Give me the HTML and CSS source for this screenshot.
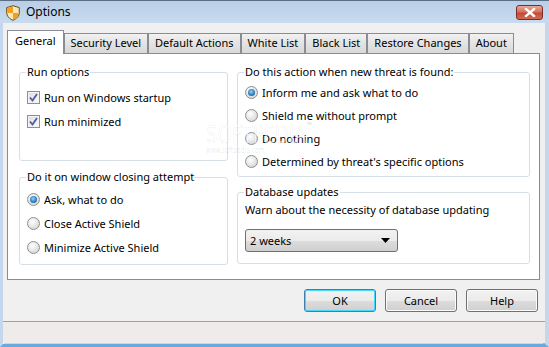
FILE: index.html
```html
<!DOCTYPE html>
<html lang="en">
<head>
    <meta charset="UTF-8">
    <meta name="viewport" content="width=device-width, initial-scale=1.0">
    <title>Options</title>
    <link rel="stylesheet" href="styles.css">
</head>
<body>
    <div class="window">
        <div class="titlebar">
            <svg class="app-icon" width="14" height="16" viewBox="0 0 14 16">
                <path d="M7 0.7 L13.3 2.6 L13.3 7.5 C13.3 11.3 10.5 13.8 7 15.3 C3.5 13.8 0.7 11.3 0.7 7.5 L0.7 2.6 Z" fill="#f6e7b8" stroke="#6b4a14" stroke-width="1"/>
                <path d="M1.2 3 L7 1.2 L7 8 L1.2 8 Z" fill="#f0a21e"/>
                <path d="M7 8 L12.8 8 C12.6 11 10.3 13.3 7 14.7 Z" fill="#f0a21e"/>
            </svg>
            <span class="title">Options</span>
            <button class="close">
                <svg width="12" height="9" viewBox="0 0 12 9">
                    <path d="M2 1 L10 8 M10 1 L2 8" stroke="#fff" stroke-width="2.4" stroke-linecap="square"/>
                </svg>
            </button>
        </div>

        <div class="frame">
            <div class="client">
                <div class="tabs">
                    <div class="tab active">General</div>
                    <div class="tab">Security Level</div>
                    <div class="tab">Default Actions</div>
                    <div class="tab">White List</div>
                    <div class="tab">Black List</div>
                    <div class="tab">Restore Changes</div>
                    <div class="tab">About</div>
                </div>

                <div class="panel">
                    <div class="col col-left">
                        <div class="group group-run">
                            <div class="group-title">Run options</div>
                            <div class="row"><span class="checkbox checked"><svg width="9" height="9" viewBox="0 0 9 9"><path d="M1 4.5 L3.5 7.5 L8 1" fill="none" stroke="#4b5fa0" stroke-width="1.8"/></svg></span>Run on Windows startup</div>
                            <div class="row"><span class="checkbox checked"><svg width="9" height="9" viewBox="0 0 9 9"><path d="M1 4.5 L3.5 7.5 L8 1" fill="none" stroke="#4b5fa0" stroke-width="1.8"/></svg></span>Run minimized</div>
                        </div>

                        <div class="group group-close">
                            <div class="group-title">Do it on window closing attempt</div>
                            <div class="row"><span class="radio on"></span>Ask, what to do</div>
                            <div class="row"><span class="radio"></span>Close Active Shield</div>
                            <div class="row"><span class="radio"></span>Minimize Active Shield</div>
                        </div>
                    </div>

                    <div class="col col-right">
                        <div class="group group-action">
                            <div class="group-title">Do this action when new threat is found:</div>
                            <div class="row row-tight"><span class="radio on"></span>Inform me and ask what to do</div>
                            <div class="row row-tight"><span class="radio"></span>Shield me without prompt</div>
                            <div class="row row-tight"><span class="radio"></span>Do nothing</div>
                            <div class="row row-tight"><span class="radio"></span>Determined by threat's specific options</div>
                        </div>

                        <div class="group group-db">
                            <div class="group-title">Database updates</div>
                            <div class="db-text">Warn about the necessity of database updating</div>
                            <div class="select">
                                <span>2 weeks</span>
                                <svg width="9" height="5" viewBox="0 0 9 5"><path d="M0 0 H9 L4.5 5 Z" fill="#000"/></svg>
                            </div>
                        </div>
                    </div>
                </div>

                <div class="actions">
                    <button class="btn default">OK</button>
                    <button class="btn">Cancel</button>
                    <button class="btn">Help</button>
                </div>
            </div>
            <div class="statusbar"></div>
        </div>

        <div class="watermark">SOFTPEDIA<span class="tm">™</span><div class="wm-url">www.softpedia.com</div></div>
    </div>
</body>
</html>
```

FILE: styles.css
```css
* {
    box-sizing: border-box;
}

body {
    margin: 0;
    font-family: "Noto Sans", "Open Sans", sans-serif;
    font-size: 11px;
    color: #000;
    background: #fff;
}

.window {
    position: relative;
    width: 549px;
    height: 347px;
    overflow: hidden;
    background: #c4d7ec;
}

/* title bar */
.titlebar {
    height: 23px;
    display: flex;
    align-items: center;
    padding: 0 6px 0 6px;
    background: linear-gradient(#b9cfe7, #c8dbef);
    border-top: 1px solid #5a6e84;
}

.app-icon {
    margin-top: 1px;
}

.title {
    margin-left: 6px;
    flex: 1;
    font-size: 12px;
    line-height: 16px;
}

.close {
    width: 27px;
    height: 15px;
    margin-top: 1px;
    padding: 0;
    display: flex;
    align-items: center;
    justify-content: center;
    border: 1px solid #7a2c27;
    border-radius: 3px;
    background: linear-gradient(#e9a99b, #d6705f 45%, #c24a37 55%, #d36a52);
}

/* frame + client */
.frame {
    height: 324px;
    border-left: 3px solid #c4d7ec;
    border-right: 4px solid #c4d7ec;
    border-bottom: 3px solid #6aa9dd;
    box-shadow: inset 1px 0 #ffffff, inset -2px 0 #7fbce8;
}

.client {
    height: 299px;
    background: #f0f0f0;
    padding: 7px 5px 0 4px;
    border-bottom: 1px solid #a0a0a0;
}

.statusbar {
    height: 21px;
    background: #f0ebeb;
}

/* tabs */
.tabs {
    display: flex;
    align-items: flex-end;
    height: 23px;
}

.tab {
    height: 20px;
    padding: 0 6px;
    line-height: 18px;
    border: 1px solid #898c95;
    border-bottom: none;
    background: linear-gradient(#f2f2f2, #e3e3e3 50%, #d9d9d9);
    white-space: nowrap;
}

.tab.active {
    height: 24px;
    padding: 0 7px;
    margin-bottom: -1px;
    line-height: 20px;
    background: #fff;
    position: relative;
    z-index: 1;
}

/* panel */
.panel {
    display: flex;
    gap: 9px;
    width: 533px;
    height: 227px;
    padding: 18px 9px 0 11px;
    background: #fff;
    border: 1px solid #898c95;
}

.col {
    display: flex;
    flex-direction: column;
}

.col-left {
    width: 209px;
    gap: 16px;
}

.col-right {
    width: 293px;
    gap: 15px;
}

.group {
    border: 1px solid #d5dfe5;
    border-radius: 3px;
    padding: 0 6px 0 7px;
}

.group-run { height: 89px; }
.group-close { height: 88px; }
.group-action { height: 105px; }
.group-db { height: 72px; }

.group-title {
    width: fit-content;
    margin: -9px 0 0 -1px;
    padding: 0 1px;
    line-height: 16px;
    height: 16px;
    background: #fff;
    white-space: nowrap;
}

.group-run .group-title {
    margin-bottom: 5px;
}

.group-close .group-title {
    margin-bottom: 2px;
}

.group-action .group-title {
    margin-bottom: 1px;
}

.row {
    display: flex;
    align-items: center;
    height: 24px;
    white-space: nowrap;
}

.row-tight {
    height: 23px;
}

.checkbox {
    width: 13px;
    height: 13px;
    margin-right: 4px;
    border: 1px solid #8e8f8f;
    background: linear-gradient(135deg, #dcdcdc, #fbfbfb);
    display: flex;
    align-items: center;
    justify-content: center;
    box-shadow: inset 0 0 0 1px #f4f4f4;
}

.radio {
    width: 13px;
    height: 13px;
    margin-right: 4px;
    border: 1px solid #8e8f8f;
    border-radius: 50%;
    background: radial-gradient(circle at 40% 35%, #ffffff, #dcdcdc 70%, #c9c9c9);
    display: flex;
    align-items: center;
    justify-content: center;
}

.radio.on::after {
    content: "";
    width: 7px;
    height: 7px;
    border-radius: 50%;
    background: radial-gradient(circle at 45% 40%, #9ad4f8, #2c7fc0 55%, #14507e);
}

.db-text {
    margin-top: 2px;
    line-height: 16px;
    white-space: nowrap;
}

.select {
    width: 153px;
    height: 23px;
    margin-top: 11px;
    padding: 0 7px 0 4px;
    display: flex;
    align-items: center;
    justify-content: space-between;
    border: 1px solid #707070;
    border-radius: 3px;
    background: linear-gradient(#f2f2f2, #ebebeb 50%, #dddddd 51%, #cfcfcf);
}

/* buttons */
.actions {
    display: flex;
    justify-content: flex-end;
    gap: 9px;
    padding: 9px 2px 0 0;
}

.btn {
    width: 72px;
    height: 23px;
    padding: 0;
    font: inherit;
    color: #000;
    border: 1px solid #707070;
    border-radius: 3px;
    background: linear-gradient(#f2f2f2, #ebebeb 50%, #dddddd 51%, #cfcfcf);
    box-shadow: inset 0 0 0 1px #fbfbfb;
}

.btn.default {
    border-color: #3c7fb1;
    box-shadow: inset 0 0 0 1px #48d8fb;
}

/* watermark */
.watermark {
    position: absolute;
    left: 206px;
    top: 121px;
    font-family: "DejaVu Sans", sans-serif;
    font-size: 24px;
    color: rgba(255, 255, 255, 0.5);
    -webkit-text-stroke: 0.6px rgba(0, 0, 0, 0.1);
    transform: scaleX(0.75);
    transform-origin: left top;
    pointer-events: none;
}

.watermark .tm {
    font-size: 9px;
    vertical-align: top;
}

.wm-url {
    font-size: 8px;
    margin-top: -3px;
    color: rgba(0, 0, 0, 0.1);
    -webkit-text-stroke: 0;
}
```
